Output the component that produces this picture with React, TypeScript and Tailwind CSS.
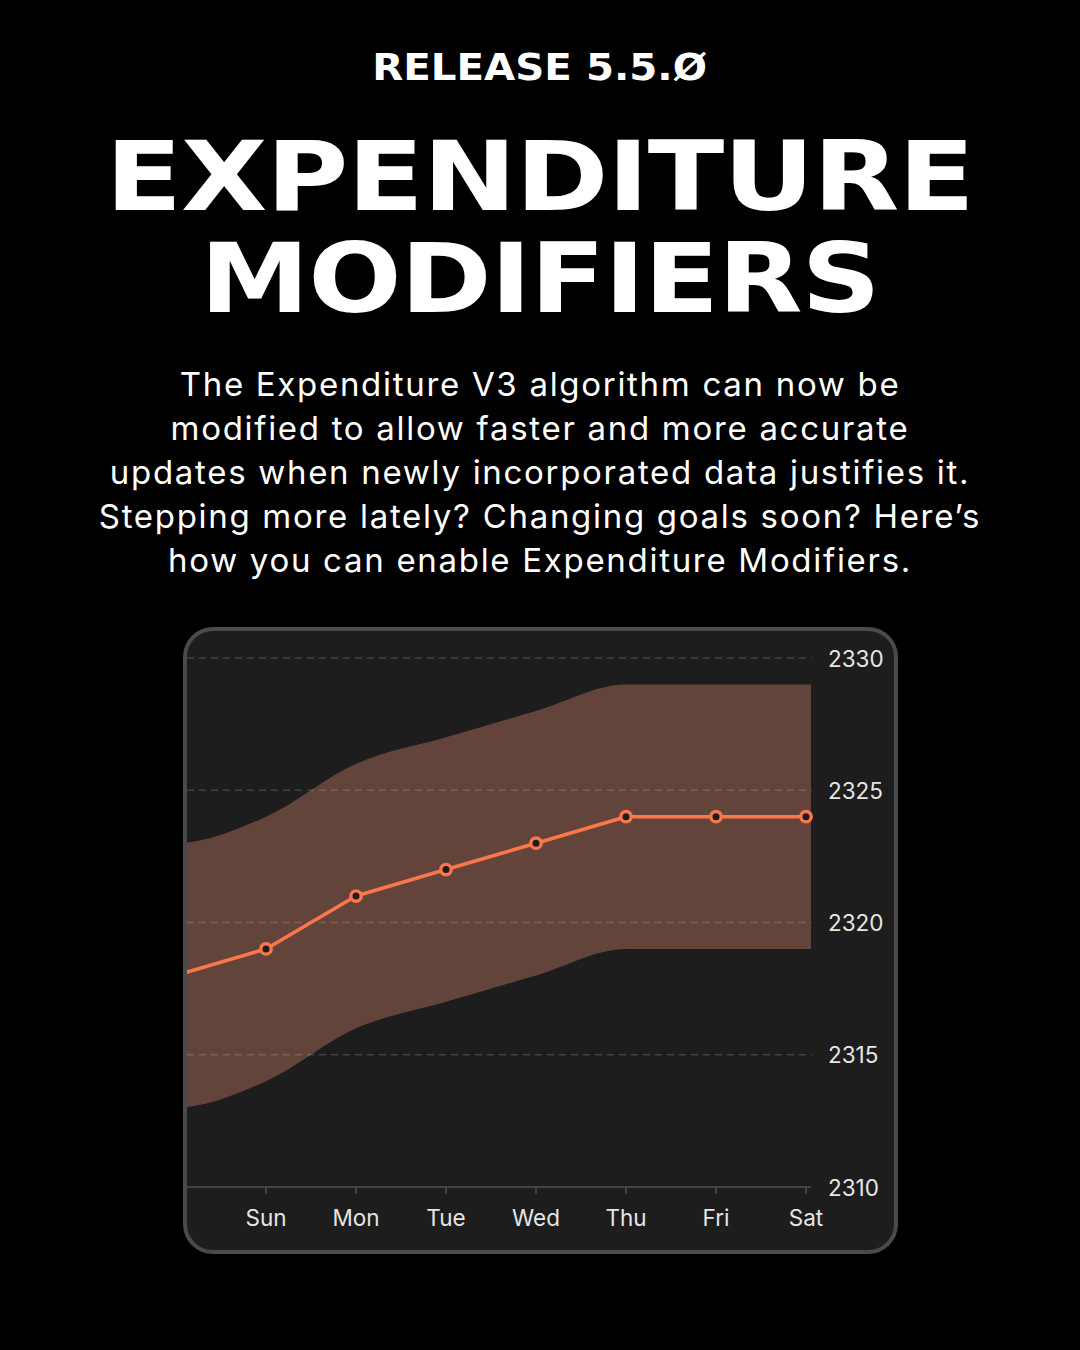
import React from "react";

const Y0 = 556;
const PER = 26.45;
const yOf = (v: number) => Y0 - (v - 2310) * PER;
const xOf = (i: number) => 79 + 90 * i;

type P = [number, number];

function monotonePath(pts: P[], move = true): string {
  const n = pts.length;
  const h: number[] = [];
  const m: number[] = [];
  for (let i = 0; i < n - 1; i++) {
    h.push(pts[i + 1][0] - pts[i][0]);
    m.push((pts[i + 1][1] - pts[i][1]) / h[i]);
  }
  const t: number[] = new Array(n).fill(0);
  t[0] = m[0];
  t[n - 1] = m[n - 2];
  for (let i = 1; i < n - 1; i++) {
    const s0 = m[i - 1];
    const s1 = m[i];
    if (s0 * s1 <= 0) {
      t[i] = 0;
    } else {
      const p = (s0 * h[i] + s1 * h[i - 1]) / (h[i - 1] + h[i]);
      t[i] = (Math.sign(s0) + Math.sign(s1)) * Math.min(Math.abs(s0), Math.abs(s1), 0.5 * Math.abs(p));
    }
  }
  let d = move ? `M${pts[0][0]},${pts[0][1]}` : `L${pts[0][0]},${pts[0][1]}`;
  for (let i = 0; i < n - 1; i++) {
    const dx = h[i] / 3;
    d += ` C${pts[i][0] + dx},${pts[i][1] + t[i] * dx} ${pts[i + 1][0] - dx},${pts[i + 1][1] - t[i + 1] * dx} ${pts[i + 1][0]},${pts[i + 1][1]}`;
  }
  return d;
}

const values: { i: number; v: number }[] = [
  { i: -2, v: 2318 },
  { i: -1, v: 2318 },
  { i: 0, v: 2319 },
  { i: 1, v: 2321 },
  { i: 2, v: 2322 },
  { i: 3, v: 2323 },
  { i: 4, v: 2324 },
  { i: 5, v: 2324 },
  { i: 6, v: 2324 },
  { i: 7, v: 2324 },
];

const days = ["Sun", "Mon", "Tue", "Wed", "Thu", "Fri", "Sat"];
const ticks = [2330, 2325, 2320, 2315];

function Chart() {
  const upper: P[] = values.map((d) => [xOf(d.i), yOf(d.v + 5)]);
  const lower: P[] = values.map((d) => [xOf(d.i), yOf(d.v - 5)]).reverse() as P[];
  const bandD = monotonePath(upper) + " " + monotonePath(lower, false) + " Z";
  const linePts = values.filter((d) => d.i >= -1 && d.i <= 6).map((d) => `${xOf(d.i)},${yOf(d.v)}`).join(" ");
  return (
    <svg width="707" height="619" viewBox="0 0 707 619" className="block">
      <defs>
        <clipPath id="plot">
          <rect x="0" y="0" width="624" height="556" />
        </clipPath>
      </defs>
      <g clipPath="url(#plot)">
        <path d={bandD} fill="#63443b" />
      </g>
      {ticks.map((t) => (
        <line
          key={t}
          x1="0"
          x2="625"
          y1={yOf(t)}
          y2={yOf(t)}
          stroke="rgba(255,255,255,0.17)"
          strokeWidth="1.3"
          strokeDasharray="7 5"
        />
      ))}
      <line x1="0" x2="624" y1={Y0} y2={Y0} stroke="#505050" strokeWidth="1.5" />
      {days.map((d, i) => (
        <line key={d} x1={xOf(i)} x2={xOf(i)} y1={Y0} y2={Y0 + 7} stroke="#505050" strokeWidth="1.5" />
      ))}
      <g clipPath="url(#plot)">
        <polyline points={linePts} fill="none" stroke="#fb774b" strokeWidth="3.6" strokeLinejoin="round" />
      </g>
      {values
        .filter((d) => d.i >= 0 && d.i <= 6)
        .map((d) => (
          <circle key={d.i} cx={xOf(d.i)} cy={yOf(d.v)} r="5.2" fill="#1d1d1d" stroke="#fb774b" strokeWidth="3.4" />
        ))}
      {[...ticks, 2310].map((t) => (
        <text
          key={t}
          x="641"
          y={yOf(t)}
          dominantBaseline="central"
          fill="#e6e6e6"
          fontSize="22.5"
          fontFamily="Inter, 'Noto Sans', sans-serif"
        >
          {t}
        </text>
      ))}
      {days.map((d, i) => (
        <text
          key={d}
          x={xOf(i)}
          y="586"
          textAnchor="middle"
          dominantBaseline="central"
          fill="#e6e6e6"
          fontSize="22.5"
          fontFamily="Inter, 'Noto Sans', sans-serif"
        >
          {d}
        </text>
      ))}
    </svg>
  );
}

export default function App() {
  const para = [
    "The Expenditure V3 algorithm can now be",
    "modified to allow faster and more accurate",
    "updates when newly incorporated data justifies it.",
    "Stepping more lately? Changing goals soon? Here\u2019s",
    "how you can enable Expenditure Modifiers.",
  ];
  return (
    <div className="w-[1080px] h-[1350px] bg-black overflow-hidden flex flex-col items-center text-white">
      <div className="mt-[48px] h-[38px] flex items-center justify-center">
        <span className="inline-block scale-x-[1.09] font-['DejaVu_Sans',sans-serif] font-bold text-[37px] leading-none">
          RELEASE 5.5.Ø
        </span>
      </div>
      <div className="mt-[40px] flex flex-col items-center font-['DejaVu_Sans',sans-serif] font-bold text-[96px] leading-[102px]">
        <span className="inline-block scale-x-[1.168] tracking-[-1px]">EXPENDITURE</span>
        <span className="inline-block scale-x-[1.145] tracking-[-1px]">MODIFIERS</span>
      </div>
      <div className="mt-[32px] flex flex-col items-center font-['Inter',sans-serif] text-[33px] leading-[44px] tracking-[1.7px] text-white">
        {para.map((l) => (
          <span key={l} className="whitespace-nowrap">
            {l}
          </span>
        ))}
      </div>
      <div className="mt-[45px] w-[715px] h-[627px] rounded-[30px] border-4 border-[#4a4a4a] bg-[#1d1d1d] overflow-hidden">
        <Chart />
      </div>
    </div>
  );
}
